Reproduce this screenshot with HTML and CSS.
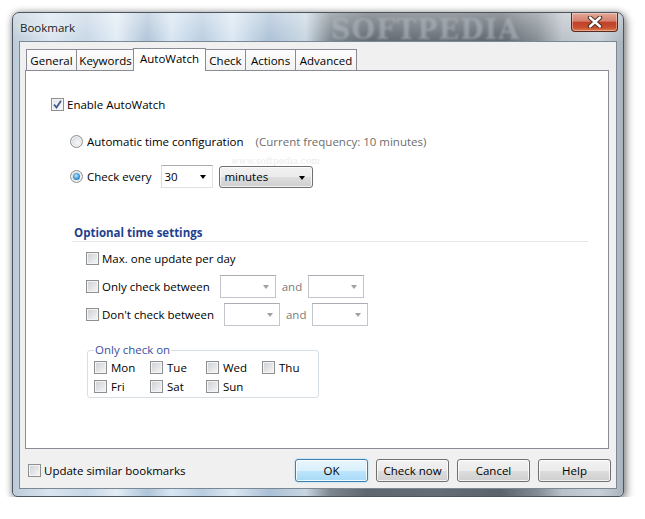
FILE: index.html
```html
<!DOCTYPE html>
<html>
<head>
<meta charset="utf-8">
<link rel="stylesheet" href="styles.css">
</head>
<body>
<div class="window">
  <div class="titlebar">
    <span class="title">Bookmark</span>
    <span class="wm-title">SOFTPEDIA</span>
    <span class="close"><svg width="16" height="12" viewBox="0 0 16 12"><path d="M3 1.5 L13 10.5 M13 1.5 L3 10.5" stroke="#4a2a22" stroke-width="4.4" stroke-linecap="round"/><path d="M3 1.5 L13 10.5 M13 1.5 L3 10.5" stroke="#ffffff" stroke-width="2.4" stroke-linecap="round"/></svg></span>
  </div>
  <div class="client">
    <div class="tabs">
      <div class="tab t1">General</div>
      <div class="tab t2">Keywords</div>
      <div class="tab t3 active">AutoWatch</div>
      <div class="tab t4">Check</div>
      <div class="tab t5">Actions</div>
      <div class="tab t6">Advanced</div>
    </div>
    <div class="panel">
      <span class="wm wm2">www.softpedia.com</span>
      <div class="row r-enable">
        <span class="cb checked"><svg width="9" height="9" viewBox="0 0 9 9"><path d="M1 4.5 L3.5 7.5 L8 0.8" fill="none" stroke="#3d5a92" stroke-width="1.8"/></svg></span>
        <span class="lbl">Enable AutoWatch</span>
      </div>
      <div class="row r-auto">
        <span class="rb"></span>
        <span class="lbl">Automatic time configuration</span>
        <span class="hint">(Current frequency: 10 minutes)</span>
      </div>
      <div class="row r-every">
        <span class="rb on"><span class="dot"></span></span>
        <span class="lbl">Check every</span>
        <span class="combo c-num"><span class="val">30</span><span class="arr"></span></span>
        <span class="drop"><span class="val">minutes</span><span class="arr"></span></span>
      </div>
      <div class="section">
        <div class="heading">Optional time settings</div>
        <div class="row o1">
          <span class="cb"></span><span class="lbl">Max. one update per day</span>
        </div>
        <div class="row o2">
          <span class="cb"></span><span class="lbl">Only check between</span>
          <span class="combo c-empty"><span class="arr grey"></span></span>
          <span class="and">and</span>
          <span class="combo c-empty"><span class="arr grey"></span></span>
        </div>
        <div class="row o3">
          <span class="cb"></span><span class="lbl">Don't check between</span>
          <span class="combo c-empty"><span class="arr grey"></span></span>
          <span class="and">and</span>
          <span class="combo c-empty"><span class="arr grey"></span></span>
        </div>
        <fieldset class="days">
          <legend>Only check on</legend>
          <div class="day-grid">
            <div class="day"><span class="cb"></span><span>Mon</span></div>
            <div class="day"><span class="cb"></span><span>Tue</span></div>
            <div class="day"><span class="cb"></span><span>Wed</span></div>
            <div class="day"><span class="cb"></span><span>Thu</span></div>
            <div class="day"><span class="cb"></span><span>Fri</span></div>
            <div class="day"><span class="cb"></span><span>Sat</span></div>
            <div class="day"><span class="cb"></span><span>Sun</span></div>
          </div>
        </fieldset>
      </div>
    </div>
    <div class="footer">
      <div class="row f-left"><span class="cb"></span><span class="lbl">Update similar bookmarks</span></div>
      <div class="buttons">
        <span class="btn default">OK</span>
        <span class="btn">Check now</span>
        <span class="btn">Cancel</span>
        <span class="btn">Help</span>
      </div>
    </div>
  </div>
</div>
</body>
</html>
```
FILE: styles.css
```css
html, body { margin: 0; padding: 0; background: #ffffff; }
body { font-family: "Open Sans", "Noto Sans", sans-serif; font-size: 11.5px; color: #000; }

.window {
  margin: 12px 0 0 12px;
  width: 610px;
  height: 483px;
  border: 1px solid #4a5560;
  border-radius: 7px 7px 5px 5px;
  box-shadow: 2px 3px 10px rgba(0,0,0,0.45), 0 0 6px rgba(0,0,0,0.25);
  background:
    linear-gradient(to bottom, rgba(255,255,255,0.35), rgba(255,255,255,0) 30px),
    linear-gradient(to right, #bccbd9 0%, #d9e5f0 6%, #c6d6e6 12%, #e2ecf5 17%, #afc4d8 22%, #d8e6f3 26%, #b9cde0 31%, #dce8f3 36%, #aac0d6 42%, #c8d6e2 48%, #7d868e 52%, #5e666e 58%, #646c74 70%, #5a626a 80%, #848c93 86%, #b9c0c7 90%, #c9d0d7 96%, #aab4be 100%);
  display: flex;
  flex-direction: column;
  overflow: hidden;
}

.titlebar {
  height: 28px;
  display: flex;
  align-items: center;
  position: relative;
}
.title { margin-left: 7px; font-size: 11.5px; color: #1a1a1a; text-shadow: 0 0 6px rgba(255,255,255,0.9); position: relative; z-index: 1; }
.wm-title {
  position: absolute; left: 318px; top: 1px;
  font-family: "DejaVu Serif", serif; font-weight: bold; font-size: 27px; letter-spacing: 1px;
  color: rgba(175,182,190,0.6); filter: blur(0.8px);
}
.close {
  position: absolute; right: 5px; top: 0;
  width: 45px; height: 18px;
  border: 1px solid #5a2a20; border-top: none;
  border-radius: 0 0 4px 4px;
  background: linear-gradient(to bottom, #e4a897 0%, #d4826c 45%, #c0402a 52%, #c8502f 80%, #e07a4a 100%);
  box-shadow: inset 0 0 0 1px rgba(255,255,255,0.35);
  display: flex; align-items: center; justify-content: center;
}

.client {
  margin: 0 6px 7px 6px;
  flex: 1;
  background: #f0f0f0;
  border: 1px solid #7a8896;
  padding: 6px 7px 0 5px;
  display: flex;
  flex-direction: column;
}

.tabs { display: flex; height: 22px; padding-left: 1px; align-items: flex-end; position: relative; z-index: 2; }
.tab {
  height: 21px; box-sizing: border-box;
  border: 1px solid #898c95; border-bottom: none;
  background: linear-gradient(to bottom, #fdfdfd, #f2f2f2);
  display: flex; align-items: center; justify-content: center;
  margin-right: -1px; font-size: 11.5px; padding-top: 1px;
}
.tab.active {
  height: 23px; background: #fff; margin-bottom: -1px;
  margin-left: -1px; margin-right: -1px; padding-bottom: 3px; padding-top: 0; z-index: 3;
}
.t1 { width: 51px; }
.t2 { width: 59px; }
.t3 { width: 73px; }
.t4 { width: 41px; }
.t5 { width: 51px; }
.t6 { width: 62px; }

.panel {
  height: 379px; box-sizing: border-box;
  background: #fff; border: 1px solid #898c95;
  padding: 25px 0 0 25px;
  position: relative;
}
.wm { position: absolute; color: #ececec; font-family: "DejaVu Serif", serif; }
.wm2 { left: 205px; top: 85px; font-size: 9px; }

.row { display: flex; align-items: center; white-space: nowrap; }
.lbl { margin-left: 3px; }
.r-enable { height: 16px; }
.r-auto { height: 16px; margin-top: 21px; margin-left: 19px; }
.r-auto .lbl, .r-every .lbl { margin-left: 4px; }
.hint { color: #6d6d6d; margin-left: 12px; }
.r-every { height: 23px; margin-top: 16px; margin-left: 19px; }

.cb {
  width: 13px; height: 13px; box-sizing: border-box; flex: none;
  border: 1px solid #8e8f8f;
  background: linear-gradient(135deg, #cbcfd5, #f7f7f7);
  box-shadow: inset 0 0 0 1px #f4f4f4;
  display: flex; align-items: center; justify-content: center;
}
.cb.checked { background: linear-gradient(135deg, #e0e3e8, #fbfbfb); }

.rb {
  width: 13px; height: 13px; box-sizing: border-box; flex: none;
  border: 1px solid #8e8f8f; border-radius: 50%;
  background: radial-gradient(circle at 60% 60%, #f8f8f8 0%, #d8dbe0 70%, #c9ccd2 100%);
  box-shadow: inset 0 0 0 1px #f2f2f2;
  display: flex; align-items: center; justify-content: center;
}
.rb .dot {
  width: 7px; height: 7px; border-radius: 50%;
  background: radial-gradient(circle at 45% 40%, #c9f0ff 0%, #4aa3dc 45%, #1b5890 100%);
}

.combo {
  height: 23px; box-sizing: border-box; background: #fff;
  border: 1px solid #c2c5cc; border-top-color: #abadb3;
  display: flex; align-items: center; position: relative;
}
.c-num { width: 52px; margin-left: 10px; border-color: #e0e1e5; border-top-color: #abadb3; border-left-color: #dadbe0; }
.c-num .val { margin-left: 2px; }
.arr {
  position: absolute; right: 6px; top: 9px;
  width: 0; height: 0;
  border-left: 3.5px solid transparent; border-right: 3.5px solid transparent;
  border-top: 4px solid #000;
}
.arr.grey { border-top-color: #a0a0a0; }
.drop {
  width: 94px; height: 22px; box-sizing: border-box; margin-left: 6px;
  border: 1px solid #707070; border-radius: 3px;
  background: linear-gradient(to bottom, #f2f2f2 0%, #ebebeb 50%, #dddddd 51%, #cfcfcf 100%);
  box-shadow: inset 0 0 0 1px rgba(255,255,255,0.7);
  display: flex; align-items: center; position: relative;
}
.drop .val { margin-left: 4px; }
.drop .arr { right: 7px; }

.section { margin-left: 21px; width: 516px; }
.heading {
  height: 16px; margin-top: 37px; padding-left: 2px;
  border-bottom: 1px solid #e3e6ea;
  color: #1e3f8f; font-weight: bold; font-size: 11.5px; line-height: 16px;
}
.o1 { height: 16px; margin-top: 8px; margin-left: 14px; }
.o2 { height: 23px; margin-top: 9px; margin-left: 14px; }
.o3 { height: 23px; margin-top: 5px; margin-left: 14px; }
.o2 .lbl, .o3 .lbl { margin-right: 10px; }
.c-empty { width: 56px; }
.and { color: #7a7a7a; margin: 0 6px; }

.days {
  margin: 16px 0 0 15px; width: 232px; box-sizing: border-box;
  border: 1px solid #d5dfe5; border-radius: 3px;
  padding: 0 0 1px 6px;
}
.days legend { padding: 0 1px; margin-left: 0; color: #3b4fa0; line-height: 16px; }
.day-grid { display: grid; grid-template-columns: repeat(4, 56px); grid-auto-rows: 19px; }
.day { display: flex; align-items: center; }
.day span + span { margin-left: 4px; }

.footer {
  flex: 1; display: flex; align-items: flex-start; justify-content: space-between;
  padding-top: 10px;
}
.f-left { height: 23px; margin-left: 3px; }
.buttons { display: flex; gap: 8px; margin-right: -2px; }
.btn {
  width: 73px; height: 23px; box-sizing: border-box;
  border: 1px solid #707070; border-radius: 3px;
  background: linear-gradient(to bottom, #f2f2f2 0%, #ebebeb 50%, #dddddd 51%, #cfcfcf 100%);
  box-shadow: inset 0 0 0 1px rgba(255,255,255,0.75);
  display: flex; align-items: center; justify-content: center; font-size: 11.5px;
}
.btn.default {
  border-color: #3c7fb1;
  background: linear-gradient(to bottom, #eaf6fd 0%, #d9f0fc 50%, #bee6fd 51%, #a7d9f5 100%);
  box-shadow: inset 0 0 0 1px rgba(255,255,255,0.8), 0 0 2px #8ad0f8;
}
```
